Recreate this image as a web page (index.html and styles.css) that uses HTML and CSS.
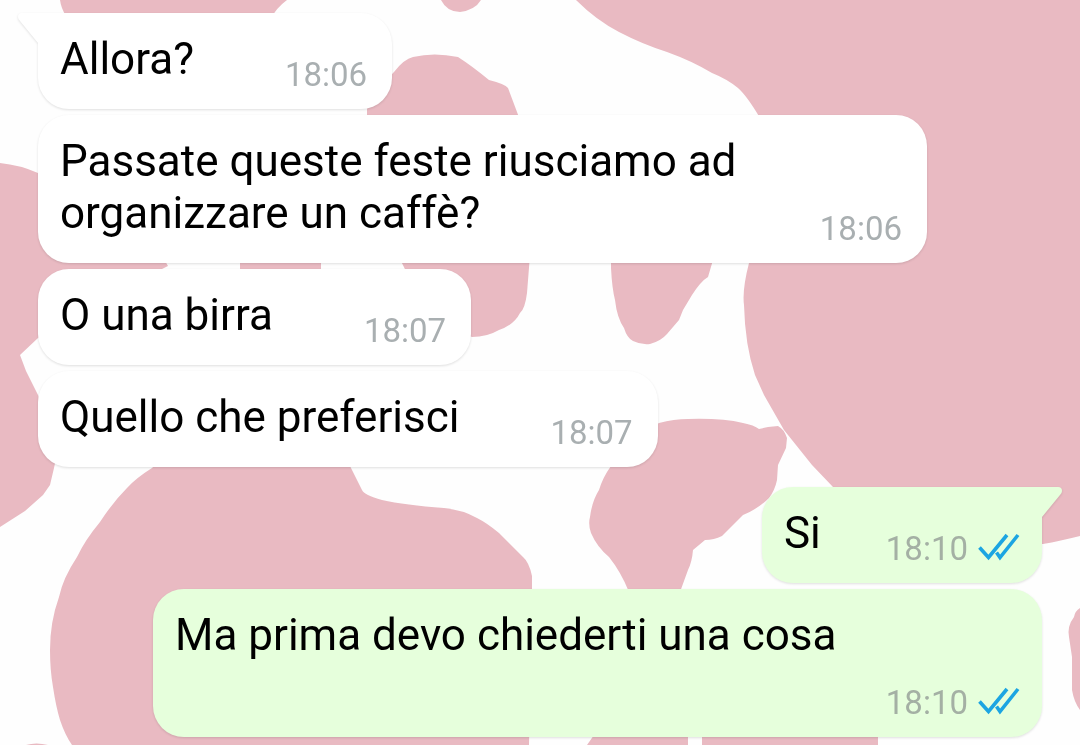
FILE: index.html
```html
<!DOCTYPE html>
<html lang="it">
<head>
<meta charset="utf-8">
<meta name="viewport" content="width=device-width, initial-scale=1">
<title>Chat</title>
<link rel="stylesheet" href="styles.css">
</head>
<body>
<svg class="wallpaper" viewBox="0 0 1080 745" preserveAspectRatio="xMidYMid slice" aria-hidden="true">
  <path d="M60 0Q61 8 66 16L130 60L270 20Q276 8 287 0Z"/>
  <path d="M441 0Q447 12 460 12Q475 10 481 0Z"/>
  <path d="M367 120V100L394 72Q404 59 413 57Q434 52 458 57Q472 66 489 80Q505 84 508 88L520 120Z"/>
  <path d="M576 0Q596 20 619 32Q642 44 667 52Q692 61 712 73Q727 79 738 88Q747 96 760 118L749 263Q742 290 744 305Q745 345 755 375L764 395L784 430L812 465L833 487L930 540L1043 544Q1060 541 1080 536V0Z"/>
  <path d="M0 163Q20 165 38 173L130 200L168 266L100 300L38 338L20 355L26 371L38 395L60 440L54 468L50 485L43 495L25 511L0 527Z"/>
  <path d="M240 255H321V275H240Z"/>
  <path d="M398 255H530L527 293Q525 309 520 313Q514 325 499 330Q487 337 472 337L430 320Z"/>
  <path d="M611 255V268Q612 288 615 300Q617 318 624 328Q627 338 633 341Q641 345 650 344Q661 341 667 334L679 320L683 310L692 295Q701 281 708 277L713 260Z"/>
  <path d="M158 462L152 468Q136 478 127 488Q113 502 100 522Q85 540 77 557Q63 578 59 597Q50 622 50 650Q50 670 53 687Q56 707 60 720Q65 735 72 745H529L532 588V576Q529 562 523 557L499 533Q487 523 477 518Q463 510 444 508Q405 505 382 500Q364 495 362 490L350 466Z"/>
  <path d="M630 440L659 423Q674 419 688 419Q722 418 743 423Q754 425 759 429L768 427L778 426Q784 429 787 438L786 448L778 465L777 480Q775 490 769 498Q758 509 743 515L722 536Q714 540 705 540L693 550Q692 562 688 570L680 592H629Q621 572 609 557Q597 547 591 533Q588 524 590 517Q592 501 599 490Q603 477 611 466Z"/>
  <path d="M594 735L587 745H688V735ZM702 735V745H878V735ZM26 745Q36 742 48 745Z"/>
  <path d="M1080 608Q1075 611 1074 617Q1067 626 1069 637L1072 657V690Q1074 702 1080 710Z"/>
</svg>

<svg class="symbols" aria-hidden="true">
  <symbol id="read" viewBox="0 0 42 30">
    <path d="M1.500 15.500L10.500 25.500L29 3M18.500 20.500L22 25.500L40 3" fill="none" stroke="currentColor" stroke-width="3.600" stroke-linejoin="miter"/>
  </symbol>
  <symbol id="tail" viewBox="0 0 22 32">
    <path d="M22 0H4Q0 0 0 4Q0 6 2 8L20 30H22Z" fill="currentColor"/>
  </symbol>
</svg>

<main class="chat">
  <ol class="group">
    <li class="bubble bubble-first">
      <svg class="tail" aria-hidden="true"><use href="#tail"/></svg>
      <p class="text">Allora?</p>
      <span class="meta"><time>18:06</time></span>
    </li>
    <li class="bubble bubble-long">
      <p class="text">Passate queste feste riusciamo ad organizzare un caffè?</p>
      <span class="meta"><time>18:06</time></span>
    </li>
    <li class="bubble">
      <p class="text">O una birra</p>
      <span class="meta"><time>18:07</time></span>
    </li>
    <li class="bubble">
      <p class="text">Quello che preferisci</p>
      <span class="meta"><time>18:07</time></span>
    </li>
  </ol>
  <ol class="group group-sent">
    <li class="bubble bubble-first">
      <svg class="tail" aria-hidden="true"><use href="#tail"/></svg>
      <p class="text">Si</p>
      <span class="meta"><time>18:10</time><svg class="read" role="img" aria-label="Letto"><use href="#read"/></svg></span>
    </li>
    <li class="bubble bubble-stacked">
      <p class="text">Ma prima devo chiederti una cosa</p>
      <span class="meta"><time>18:10</time><svg class="read" role="img" aria-label="Letto"><use href="#read"/></svg></span>
    </li>
  </ol>
</main>
</body>
</html>
```
FILE: styles.css
```css
* {
  box-sizing: border-box;
}

body {
  margin: 0;
  background: #fefefe;
  color: #000;
  font-family: Roboto, "Liberation Sans", sans-serif;
}

.wallpaper {
  position: fixed;
  inset: 0;
  z-index: -1;
  width: 100%;
  height: 100%;
  fill: #e9bac2;
}

.symbols {
  position: absolute;
  width: 0;
  height: 0;
}

.chat {
  display: flex;
  flex-direction: column;
  gap: 20px;
  padding: 13px 38px 8px;
}

.group {
  display: flex;
  flex-direction: column;
  align-items: flex-start;
  gap: 6px;
  margin: 0;
  padding: 0;
  list-style: none;
}

.group-sent {
  align-items: flex-end;
}

.bubble {
  position: relative;
  display: flex;
  align-items: flex-end;
  justify-content: flex-end;
  column-gap: 91px;
  max-width: 889px;
  padding: 20px 25px 14px 22px;
  border-radius: 31px;
  background: #fff;
  color: #fff;
  filter: drop-shadow(0 1px 1px rgba(0, 0, 0, 0.12));
}

.bubble-long {
  column-gap: 60px;
}

.bubble-long .text {
  flex-grow: 1;
}

.group-sent .bubble {
  column-gap: 65px;
  padding-right: 22px;
  background: #e6ffdc;
  color: #e6ffdc;
}

.bubble-first {
  border-top-left-radius: 0;
}

.group-sent .bubble-first {
  border-top-left-radius: 31px;
  border-top-right-radius: 0;
}

.bubble-stacked {
  flex-wrap: wrap;
  row-gap: 12px;
}

.bubble-stacked .text {
  flex-grow: 1;
}

.tail {
  position: absolute;
  top: 0;
  left: -20px;
  width: 22px;
  height: 32px;
}

.group-sent .tail {
  right: -20px;
  left: auto;
  transform: scaleX(-1);
}

.text {
  margin: 0 0 10px;
  color: #000;
  font-size: 44px;
  line-height: 52px;
}

.meta {
  display: flex;
  align-items: center;
  gap: 10px;
  color: #a9afb1;
  font-size: 33px;
  line-height: 40px;
}

.group-sent .meta {
  color: #a4b0a4;
}

.read {
  width: 42px;
  height: 30px;
  margin-bottom: 4px;
  color: #1ca5e2;
}
```
